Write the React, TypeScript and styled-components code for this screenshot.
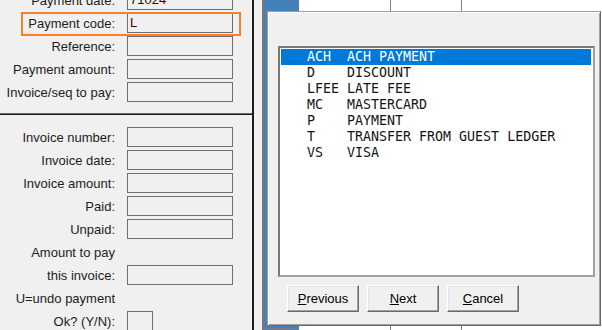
import React from 'react';
import styled, { createGlobalStyle } from 'styled-components';

const GlobalStyle = createGlobalStyle`
  html, body {
    margin: 0;
    padding: 0;
    background: #f0f0f0;
  }
  body {
    width: 602px;
    height: 330px;
    overflow: hidden;
    font-family: 'Liberation Sans', Arial, sans-serif;
  }
`;

type Field = {
  label: string;
  value?: string;
  input?: 'wide' | 'small' | 'none';
  highlighted?: boolean;
};

const paymentFields: Field[] = [
  { label: 'Payment date:', value: '71024' },
  { label: 'Payment code:', value: 'L', highlighted: true },
  { label: 'Reference:' },
  { label: 'Payment amount:' },
  { label: 'Invoice/seq to pay:' },
];

const invoiceFields: Field[] = [
  { label: 'Invoice number:' },
  { label: 'Invoice date:' },
  { label: 'Invoice amount:' },
  { label: 'Paid:' },
  { label: 'Unpaid:' },
  { label: 'Amount to pay', input: 'none' },
  { label: 'this invoice:' },
  { label: 'U=undo payment', input: 'none' },
  { label: 'Ok? (Y/N):', input: 'small' },
];

const codes: [string, string][] = [
  ['ACH', 'ACH PAYMENT'],
  ['D', 'DISCOUNT'],
  ['LFEE', 'LATE FEE'],
  ['MC', 'MASTERCARD'],
  ['P', 'PAYMENT'],
  ['T', 'TRANSFER FROM GUEST LEDGER'],
  ['VS', 'VISA'],
];

const buttons = [
  { key: 'P', rest: 'revious' },
  { key: 'N', rest: 'ext' },
  { key: 'C', rest: 'ancel' },
];

function FieldRow({ field }: { field: Field }) {
  const kind = field.input ?? 'wide';
  return (
    <Row $highlighted={!!field.highlighted}>
      <Label>{field.label}</Label>
      {kind !== 'none' && <Input $small={kind === 'small'}>{field.value}</Input>}
    </Row>
  );
}

function App() {
  return (
    <>
      <GlobalStyle />
      <Screen>
        <LeftPanel>
          <TopSection>
            {paymentFields.map((f) => (
              <FieldRow key={f.label} field={f} />
            ))}
          </TopSection>
          <BottomSection>
            {invoiceFields.map((f) => (
              <FieldRow key={f.label} field={f} />
            ))}
          </BottomSection>
        </LeftPanel>

        <BackWindow>
          <Table>
            {Array.from({ length: 10 }).map((_, i) => (
              <React.Fragment key={i}>
                <RowHeader />
                <Cell />
                <Cell />
                <Cell $last />
              </React.Fragment>
            ))}
          </Table>

          <Dialog>
            <ListBox>
              {codes.map(([code, desc], i) => (
                <ListItem key={code} $selected={i === 0}>
                  {code.padEnd(5, ' ') + desc}
                </ListItem>
              ))}
            </ListBox>
            <ButtonBar>
              {buttons.map((b) => (
                <Button key={b.key}>
                  <u>{b.key}</u>
                  {b.rest}
                </Button>
              ))}
            </ButtonBar>
          </Dialog>
        </BackWindow>
      </Screen>
    </>
  );
}

export default App;

const Screen = styled.div`
  display: flex;
  width: 602px;
  height: 330px;
  overflow: hidden;
  background: #f0f0f0;
`;

const LeftPanel = styled.div`
  width: 252px;
  flex: none;
  display: flex;
  flex-direction: column;
  border-right: 2px solid #1c1c1c;
`;

const TopSection = styled.div`
  display: flex;
  flex-direction: column;
  gap: 3px;
  margin-top: -10px;
  padding-bottom: 11px;
  border-bottom: 1px solid #6a6a6a;
`;

const BottomSection = styled.div`
  display: flex;
  flex-direction: column;
  gap: 3px;
  padding-top: 12px;
  border-top: 1px solid #1c1c1c;
`;

const Row = styled.div<{ $highlighted: boolean }>`
  position: relative;
  display: grid;
  grid-template-columns: 115px 106px;
  column-gap: 12px;
  align-items: center;
  height: 20px;

  ${({ $highlighted }) =>
    $highlighted &&
    `
    &::after {
      content: '';
      position: absolute;
      left: 21px;
      width: 220px;
      top: -1px;
      bottom: -3px;
      border: 2px solid #f5822a;
      box-sizing: border-box;
      pointer-events: none;
    }
  `}
`;

const Label = styled.div`
  text-align: right;
  font-size: 13px;
  color: #1c1c1c;
  white-space: nowrap;
`;

const Input = styled.div<{ $small: boolean }>`
  box-sizing: border-box;
  width: ${({ $small }) => ($small ? '26px' : '106px')};
  height: 20px;
  border: 1px solid #6e6e6e;
  padding-left: 2px;
  font-size: 13px;
  line-height: 18px;
  color: #4a0000;
`;

const BackWindow = styled.div`
  flex: 1;
  position: relative;
  margin-left: 8px;
  border-left: 2px solid #7a7a7a;
  background: #fff;
  overflow: hidden;
`;

const Table = styled.div`
  display: grid;
  grid-template-columns: 35px 92px 71px 1fr;
  grid-auto-rows: 37px;
  margin-top: -4px;
`;

const RowHeader = styled.div`
  background: #4580bb;
  border-bottom: 1px solid #6d7e90;
`;

const Cell = styled.div<{ $last?: boolean }>`
  background: #fff;
  border-right: ${({ $last }) => ($last ? 'none' : '1px solid #808080')};
`;

const Dialog = styled.div`
  position: absolute;
  left: 3px;
  top: 11px;
  width: 334px;
  height: 315px;
  box-sizing: border-box;
  padding: 34px 0 0 10px;
  background: #f0f0f0;
  border: 1px solid;
  border-color: #a0a0a0 #696969 #696969 #a0a0a0;
  box-shadow: inset 1px 1px #ffffff, inset -1px -1px #a0a0a0;
`;

const ListBox = styled.div`
  width: 317px;
  height: 231px;
  box-sizing: border-box;
  padding: 1px 2px 1px 1px;
  background: #fff;
  border: 2px solid;
  border-color: #7a7a7a #a0a0a0 #a0a0a0 #7a7a7a;
  font-family: 'DejaVu Sans Mono', 'Liberation Mono', monospace;
  font-size: 13.3px;
`;

const ListItem = styled.div<{ $selected: boolean }>`
  height: 16px;
  line-height: 16px;
  padding-left: 26px;
  white-space: pre;
  background: ${({ $selected }) => ($selected ? '#0078d7' : 'transparent')};
  color: ${({ $selected }) => ($selected ? '#ffffff' : '#141414')};
`;

const ButtonBar = styled.div`
  display: flex;
  gap: 8px;
  margin-top: 8px;
  padding-left: 9px;
`;

const Button = styled.button`
  width: 72px;
  height: 27px;
  box-sizing: border-box;
  padding: 0;
  font-family: 'Liberation Sans', Arial, sans-serif;
  font-size: 13px;
  color: #000;
  background: #f0f0f0;
  border: 1px solid;
  border-color: #ffffff #696969 #696969 #ffffff;
  box-shadow: inset -1px -1px #a0a0a0, inset 1px 1px #e3e3e3;
`;
